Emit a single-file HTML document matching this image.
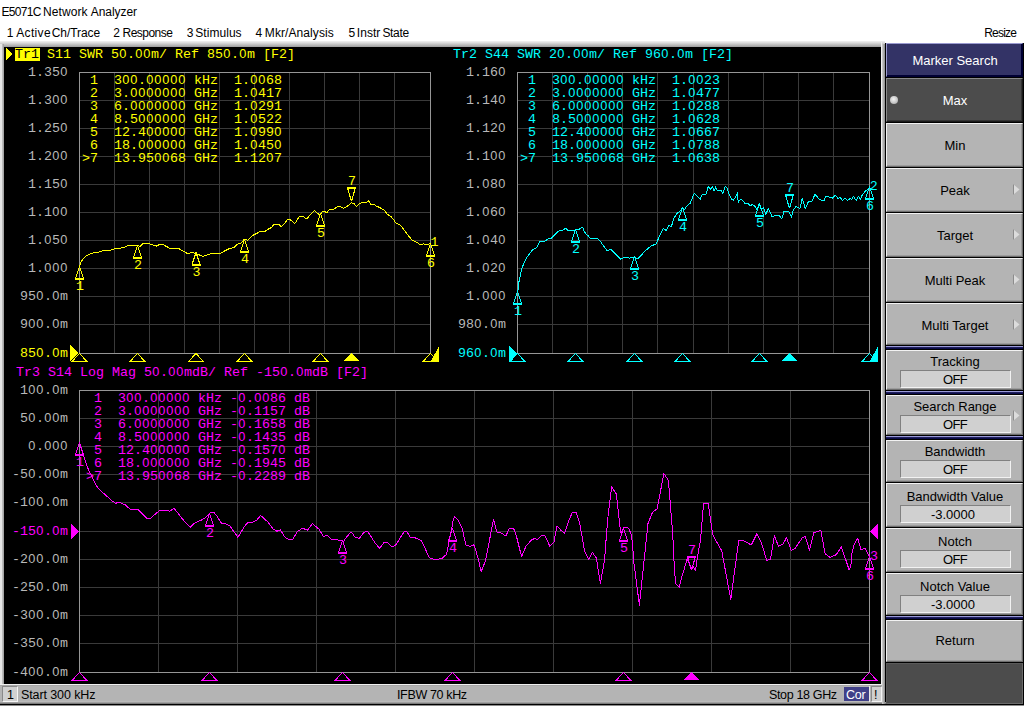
<!DOCTYPE html>
<html><head><meta charset="utf-8">
<style>
*{margin:0;padding:0}
html,body{width:1024px;height:706px;overflow:hidden;background:#ffffff;font-family:"Liberation Sans",sans-serif;color:#000;position:relative}
#svg{position:absolute;left:0;top:0}
#svg text{font-family:"Liberation Mono",monospace;font-size:13.333px}
#svg text.z{font-family:"Liberation Sans",sans-serif;font-size:12.78px}
</style></head><body>
<div style="position:absolute;left:1.5px;top:5px;white-space:nowrap;font-size:12px;letter-spacing:-0.7px">E5071C</div>
<div style="position:absolute;left:43px;top:5px;white-space:nowrap;font-size:12px;letter-spacing:0.1px">Network</div>
<div style="position:absolute;left:90.7px;top:5px;white-space:nowrap;font-size:12px;letter-spacing:-0.05px">Analyzer</div>
<div style="position:absolute;left:6.7px;top:26px;white-space:nowrap;font-size:12px;letter-spacing:0px">1</div>
<div style="position:absolute;left:16.3px;top:26px;white-space:nowrap;font-size:12px;letter-spacing:0.32px">Active</div>
<div style="position:absolute;left:51.8px;top:26px;white-space:nowrap;font-size:12px;letter-spacing:-0.09px">Ch/Trace</div>
<div style="position:absolute;left:113.3px;top:26px;white-space:nowrap;font-size:12px;letter-spacing:0px">2</div>
<div style="position:absolute;left:122.6px;top:26px;white-space:nowrap;font-size:12px;letter-spacing:-0.54px">Response</div>
<div style="position:absolute;left:186.7px;top:26px;white-space:nowrap;font-size:12px;letter-spacing:0px">3</div>
<div style="position:absolute;left:195.3px;top:26px;white-space:nowrap;font-size:12px;letter-spacing:0.04px">Stimulus</div>
<div style="position:absolute;left:255.4px;top:26px;white-space:nowrap;font-size:12px;letter-spacing:0px">4</div>
<div style="position:absolute;left:264.8px;top:26px;white-space:nowrap;font-size:12px;letter-spacing:0.09px">Mkr/Analysis</div>
<div style="position:absolute;left:348.4px;top:26px;white-space:nowrap;font-size:12px;letter-spacing:0px">5</div>
<div style="position:absolute;left:356.8px;top:26px;white-space:nowrap;font-size:12px;letter-spacing:0.05px">Instr</div>
<div style="position:absolute;left:382.4px;top:26px;white-space:nowrap;font-size:12px;letter-spacing:-0.33px">State</div>
<div style="position:absolute;left:984.2px;top:26px;white-space:nowrap;font-size:12px;letter-spacing:-0.79px">Resize</div>
<div style="position:absolute;left:0px;top:41px;width:885px;height:6px;background:linear-gradient(#f2f2f2,#dcdcdc 30%,#9c9c9c)"></div>
<div style="position:absolute;left:0px;top:44px;width:2px;height:641px;background:#e6e6e6"></div>
<div style="position:absolute;left:2px;top:44px;width:2px;height:641px;background:linear-gradient(90deg,#c8c8c8,#9a9a9a)"></div>
<div style="position:absolute;left:4px;top:47px;width:877px;height:637px;background:#000"></div>
<div style="position:absolute;left:881px;top:42px;width:1px;height:643px;background:#f0f0f0"></div>
<div style="position:absolute;left:882px;top:44px;width:3px;height:641px;background:linear-gradient(90deg,#d0d0d0,#8c8c8c)"></div>
<div style="position:absolute;left:885px;top:43px;width:139px;height:663px;background:#000"></div>
<div style="position:absolute;left:886px;top:43px;width:137px;height:34px;background:#333366;border-top:1px solid #9a9ad0;border-left:1px solid #9a9ad0;border-right:1px solid #000033;border-bottom:1px solid #000033;box-shadow:inset -1px -1px 0 #000033;box-sizing:border-box"></div>
<div style="position:absolute;left:855px;top:53px;width:200px;text-align:center;white-space:nowrap;font-size:13px;line-height:15px;color:#fff">Marker Search</div>
<div style="position:absolute;left:886px;top:78px;width:137px;height:44px;background:#4c4c4c;border-top:1px solid #8a8a8a;border-left:1px solid #8a8a8a;border-right:1px solid #1a1a1a;border-bottom:1px solid #1a1a1a;box-shadow:inset -1px -1px 0 #333333;box-sizing:border-box"></div>
<div style="position:absolute;left:855px;top:93px;width:200px;text-align:center;white-space:nowrap;font-size:13px;line-height:15px;color:#fff">Max</div>
<div style="position:absolute;left:890px;top:96px;width:8px;height:8px;border-radius:50%;background:radial-gradient(circle at 45% 40%,#f4f4f4,#c8c8c8 55%,#9a9a9a)"></div>
<div style="position:absolute;left:886px;top:123px;width:137px;height:44px;background:#b4b4b4;border-top:1px solid #f2f2f2;border-left:1px solid #f2f2f2;border-right:1px solid #6e6e6e;border-bottom:1px solid #6e6e6e;box-shadow:inset -1px -1px 0 #9c9c9c;box-sizing:border-box"></div>
<div style="position:absolute;left:855px;top:138px;width:200px;text-align:center;white-space:nowrap;font-size:13px;line-height:15px;color:#000">Min</div>
<div style="position:absolute;left:886px;top:168px;width:137px;height:44px;background:#b4b4b4;border-top:1px solid #f2f2f2;border-left:1px solid #f2f2f2;border-right:1px solid #6e6e6e;border-bottom:1px solid #6e6e6e;box-shadow:inset -1px -1px 0 #9c9c9c;box-sizing:border-box"></div>
<div style="position:absolute;left:855px;top:183px;width:200px;text-align:center;white-space:nowrap;font-size:13px;line-height:15px;color:#000">Peak</div>
<svg style="position:absolute;left:1012px;top:184px" width="9" height="12"><path d="M1.5 0.5 L7.5 5.5 L1.5 10.5 Z" fill="#dcdcdc"/><path d="M1.5 0.5 L1.5 10.5" stroke="#8c8c8c" stroke-width="1"/></svg>
<div style="position:absolute;left:886px;top:213px;width:137px;height:44px;background:#b4b4b4;border-top:1px solid #f2f2f2;border-left:1px solid #f2f2f2;border-right:1px solid #6e6e6e;border-bottom:1px solid #6e6e6e;box-shadow:inset -1px -1px 0 #9c9c9c;box-sizing:border-box"></div>
<div style="position:absolute;left:855px;top:228px;width:200px;text-align:center;white-space:nowrap;font-size:13px;line-height:15px;color:#000">Target</div>
<svg style="position:absolute;left:1012px;top:229px" width="9" height="12"><path d="M1.5 0.5 L7.5 5.5 L1.5 10.5 Z" fill="#dcdcdc"/><path d="M1.5 0.5 L1.5 10.5" stroke="#8c8c8c" stroke-width="1"/></svg>
<div style="position:absolute;left:886px;top:258px;width:137px;height:44px;background:#b4b4b4;border-top:1px solid #f2f2f2;border-left:1px solid #f2f2f2;border-right:1px solid #6e6e6e;border-bottom:1px solid #6e6e6e;box-shadow:inset -1px -1px 0 #9c9c9c;box-sizing:border-box"></div>
<div style="position:absolute;left:855px;top:273px;width:200px;text-align:center;white-space:nowrap;font-size:13px;line-height:15px;color:#000">Multi Peak</div>
<svg style="position:absolute;left:1012px;top:274px" width="9" height="12"><path d="M1.5 0.5 L7.5 5.5 L1.5 10.5 Z" fill="#dcdcdc"/><path d="M1.5 0.5 L1.5 10.5" stroke="#8c8c8c" stroke-width="1"/></svg>
<div style="position:absolute;left:886px;top:303px;width:137px;height:42px;background:#b4b4b4;border-top:1px solid #f2f2f2;border-left:1px solid #f2f2f2;border-right:1px solid #6e6e6e;border-bottom:1px solid #6e6e6e;box-shadow:inset -1px -1px 0 #9c9c9c;box-sizing:border-box"></div>
<div style="position:absolute;left:855px;top:318px;width:200px;text-align:center;white-space:nowrap;font-size:13px;line-height:15px;color:#000">Multi Target</div>
<svg style="position:absolute;left:1012px;top:319px" width="9" height="12"><path d="M1.5 0.5 L7.5 5.5 L1.5 10.5 Z" fill="#dcdcdc"/><path d="M1.5 0.5 L1.5 10.5" stroke="#8c8c8c" stroke-width="1"/></svg>
<div style="position:absolute;left:886px;top:346px;width:137px;height:1px;background:#9a9ad8"></div><div style="position:absolute;left:886px;top:347px;width:137px;height:2px;background:linear-gradient(#2a2a66,#000040)"></div>
<div style="position:absolute;left:886px;top:350px;width:137px;height:40px;background:#b4b4b4;border-top:1px solid #f2f2f2;border-left:1px solid #f2f2f2;border-right:1px solid #6e6e6e;border-bottom:1px solid #6e6e6e;box-shadow:inset -1px -1px 0 #9c9c9c;box-sizing:border-box"></div>
<div style="position:absolute;left:855px;top:354px;width:200px;text-align:center;white-space:nowrap;font-size:13px;line-height:15px;color:#000">Tracking</div>
<div style="position:absolute;left:900px;top:370px;width:111px;height:18px;background:#d0d0d0;border-top:1px solid #808080;border-left:1px solid #808080;border-bottom:1px solid #f2f2f2;border-right:1px solid #f2f2f2;box-sizing:border-box"></div><div style="position:absolute;left:855px;top:372px;width:200px;text-align:center;white-space:nowrap;font-size:13px;line-height:16px;color:#000;letter-spacing:-0.6px">OFF</div>
<div style="position:absolute;left:886px;top:395px;width:137px;height:40px;background:#b4b4b4;border-top:1px solid #f2f2f2;border-left:1px solid #f2f2f2;border-right:1px solid #6e6e6e;border-bottom:1px solid #6e6e6e;box-shadow:inset -1px -1px 0 #9c9c9c;box-sizing:border-box"></div>
<div style="position:absolute;left:855px;top:399px;width:200px;text-align:center;white-space:nowrap;font-size:13px;line-height:15px;color:#000">Search Range</div>
<div style="position:absolute;left:900px;top:415px;width:111px;height:18px;background:#d0d0d0;border-top:1px solid #808080;border-left:1px solid #808080;border-bottom:1px solid #f2f2f2;border-right:1px solid #f2f2f2;box-sizing:border-box"></div><div style="position:absolute;left:855px;top:417px;width:200px;text-align:center;white-space:nowrap;font-size:13px;line-height:16px;color:#000;letter-spacing:-0.6px">OFF</div>
<svg style="position:absolute;left:1012px;top:410px" width="9" height="12"><path d="M1.5 0.5 L7.5 5.5 L1.5 10.5 Z" fill="#dcdcdc"/><path d="M1.5 0.5 L1.5 10.5" stroke="#8c8c8c" stroke-width="1"/></svg>
<div style="position:absolute;left:886px;top:440px;width:137px;height:42px;background:#b4b4b4;border-top:1px solid #f2f2f2;border-left:1px solid #f2f2f2;border-right:1px solid #6e6e6e;border-bottom:1px solid #6e6e6e;box-shadow:inset -1px -1px 0 #9c9c9c;box-sizing:border-box"></div>
<div style="position:absolute;left:855px;top:444px;width:200px;text-align:center;white-space:nowrap;font-size:13px;line-height:15px;color:#000">Bandwidth</div>
<div style="position:absolute;left:900px;top:460px;width:111px;height:18px;background:#d0d0d0;border-top:1px solid #808080;border-left:1px solid #808080;border-bottom:1px solid #f2f2f2;border-right:1px solid #f2f2f2;box-sizing:border-box"></div><div style="position:absolute;left:855px;top:462px;width:200px;text-align:center;white-space:nowrap;font-size:13px;line-height:16px;color:#000;letter-spacing:-0.6px">OFF</div>
<div style="position:absolute;left:886px;top:483px;width:137px;height:44px;background:#b4b4b4;border-top:1px solid #f2f2f2;border-left:1px solid #f2f2f2;border-right:1px solid #6e6e6e;border-bottom:1px solid #6e6e6e;box-shadow:inset -1px -1px 0 #9c9c9c;box-sizing:border-box"></div>
<div style="position:absolute;left:855px;top:489px;width:200px;text-align:center;white-space:nowrap;font-size:13px;line-height:15px;color:#000">Bandwidth Value</div>
<div style="position:absolute;left:900px;top:505px;width:111px;height:18px;background:#d0d0d0;border-top:1px solid #808080;border-left:1px solid #808080;border-bottom:1px solid #f2f2f2;border-right:1px solid #f2f2f2;box-sizing:border-box"></div><div style="position:absolute;left:853px;top:507px;width:200px;text-align:center;white-space:nowrap;font-size:13px;line-height:16px;color:#000;letter-spacing:0">-3.0000</div>
<div style="position:absolute;left:886px;top:528px;width:137px;height:44px;background:#b4b4b4;border-top:1px solid #f2f2f2;border-left:1px solid #f2f2f2;border-right:1px solid #6e6e6e;border-bottom:1px solid #6e6e6e;box-shadow:inset -1px -1px 0 #9c9c9c;box-sizing:border-box"></div>
<div style="position:absolute;left:855px;top:534px;width:200px;text-align:center;white-space:nowrap;font-size:13px;line-height:15px;color:#000">Notch</div>
<div style="position:absolute;left:900px;top:550px;width:111px;height:18px;background:#d0d0d0;border-top:1px solid #808080;border-left:1px solid #808080;border-bottom:1px solid #f2f2f2;border-right:1px solid #f2f2f2;box-sizing:border-box"></div><div style="position:absolute;left:855px;top:552px;width:200px;text-align:center;white-space:nowrap;font-size:13px;line-height:16px;color:#000;letter-spacing:-0.6px">OFF</div>
<div style="position:absolute;left:886px;top:573px;width:137px;height:42px;background:#b4b4b4;border-top:1px solid #f2f2f2;border-left:1px solid #f2f2f2;border-right:1px solid #6e6e6e;border-bottom:1px solid #6e6e6e;box-shadow:inset -1px -1px 0 #9c9c9c;box-sizing:border-box"></div>
<div style="position:absolute;left:855px;top:579px;width:200px;text-align:center;white-space:nowrap;font-size:13px;line-height:15px;color:#000">Notch Value</div>
<div style="position:absolute;left:900px;top:595px;width:111px;height:18px;background:#d0d0d0;border-top:1px solid #808080;border-left:1px solid #808080;border-bottom:1px solid #f2f2f2;border-right:1px solid #f2f2f2;box-sizing:border-box"></div><div style="position:absolute;left:853px;top:597px;width:200px;text-align:center;white-space:nowrap;font-size:13px;line-height:16px;color:#000;letter-spacing:0">-3.0000</div>
<div style="position:absolute;left:886px;top:391px;width:137px;height:1px;background:#9a9ad8"></div><div style="position:absolute;left:886px;top:392px;width:137px;height:2px;background:linear-gradient(#2a2a66,#000040)"></div>
<div style="position:absolute;left:886px;top:436px;width:137px;height:1px;background:#9a9ad8"></div><div style="position:absolute;left:886px;top:437px;width:137px;height:2px;background:linear-gradient(#2a2a66,#000040)"></div>
<div style="position:absolute;left:886px;top:616px;width:137px;height:1px;background:#9a9ad8"></div><div style="position:absolute;left:886px;top:617px;width:137px;height:2px;background:linear-gradient(#2a2a66,#000040)"></div>
<div style="position:absolute;left:886px;top:620px;width:137px;height:42px;background:#b4b4b4;border-top:1px solid #f2f2f2;border-left:1px solid #f2f2f2;border-right:1px solid #6e6e6e;border-bottom:1px solid #6e6e6e;box-shadow:inset -1px -1px 0 #9c9c9c;box-sizing:border-box"></div>
<div style="position:absolute;left:855px;top:633px;width:200px;text-align:center;white-space:nowrap;font-size:13px;line-height:15px;color:#000">Return</div>
<div style="position:absolute;left:886px;top:663px;width:137px;height:41px;background:#4c4c4c;border-top:1px solid #5a5a5a;border-left:1px solid #5a5a5a;border-right:1px solid #6a6a6a;border-bottom:1px solid #6a6a6a;box-sizing:border-box"></div>
<div style="position:absolute;left:0px;top:684px;width:882px;height:1px;background:#f0f0f0"></div>
<div style="position:absolute;left:0px;top:685px;width:882px;height:18px;background:#b4b4b4"></div>
<div style="position:absolute;left:0px;top:685px;width:882px;height:1px;background:#a8a8a8"></div>
<div style="position:absolute;left:0px;top:701px;width:882px;height:1px;background:#bababa"></div>
<div style="position:absolute;left:0px;top:702px;width:886px;height:1px;background:#a0a0a0"></div>
<div style="position:absolute;left:0px;top:703px;width:886px;height:1px;background:#7a7a7a"></div>
<div style="position:absolute;left:0px;top:704px;width:1024px;height:1px;background:#000"></div>
<div style="position:absolute;left:0px;top:705px;width:1024px;height:1px;background:#8c8c8c"></div>
<div style="position:absolute;left:882px;top:685px;width:3px;height:19px;background:linear-gradient(90deg,#d0d0d0,#8c8c8c)"></div>
<div style="position:absolute;left:2px;top:686px;width:16px;height:16px;background:#d0d0d0;border-top:1px solid #8a8a8a;border-left:1px solid #8a8a8a;border-bottom:1px solid #f4f4f4;border-right:1px solid #f4f4f4;box-sizing:border-box"></div>
<div style="position:absolute;left:7px;top:688px;white-space:nowrap;font-size:12.5px;line-height:15px;color:#000;">1</div>
<div style="position:absolute;left:21px;top:688px;white-space:nowrap;font-size:12.5px;line-height:15px;color:#000;letter-spacing:-0.1px">Start 300 kHz</div>
<div style="position:absolute;left:397px;top:688px;white-space:nowrap;font-size:12.5px;line-height:15px;color:#000;letter-spacing:-0.35px">IFBW 70 kHz</div>
<div style="position:absolute;left:769px;top:688px;white-space:nowrap;font-size:12.5px;line-height:15px;color:#000;letter-spacing:-0.35px">Stop 18 GHz</div>
<div style="position:absolute;left:844px;top:687px;width:25px;height:14px;background:#404088"></div>
<div style="position:absolute;left:869px;top:686px;width:1px;height:16px;background:#e8e8e8"></div>
<div style="position:absolute;left:871px;top:686px;width:11px;height:16px;background:#d0d0d0;border-top:1px solid #8a8a8a;border-left:1px solid #8a8a8a;border-bottom:1px solid #f4f4f4;border-right:1px solid #f4f4f4;box-sizing:border-box"></div>
<div style="position:absolute;left:846px;top:688px;white-space:nowrap;font-size:12.5px;line-height:15px;color:#000;color:#fff;letter-spacing:-0.2px">Cor</div>
<div style="position:absolute;left:874px;top:688px;white-space:nowrap;font-size:12.5px;line-height:15px;color:#000;">!</div>
<svg id="svg" width="881" height="684" shape-rendering="crispEdges">
<g stroke="#3a3a3a" stroke-width="1"><line x1="114.5" y1="72" x2="114.5" y2="353"/><line x1="149.5" y1="72" x2="149.5" y2="353"/><line x1="184.5" y1="72" x2="184.5" y2="353"/><line x1="219.5" y1="72" x2="219.5" y2="353"/><line x1="254.5" y1="72" x2="254.5" y2="353"/><line x1="289.5" y1="72" x2="289.5" y2="353"/><line x1="324.5" y1="72" x2="324.5" y2="353"/><line x1="359.5" y1="72" x2="359.5" y2="353"/><line x1="394.5" y1="72" x2="394.5" y2="353"/><line x1="79" y1="100.5" x2="430" y2="100.5"/><line x1="79" y1="128.5" x2="430" y2="128.5"/><line x1="79" y1="156.5" x2="430" y2="156.5"/><line x1="79" y1="184.5" x2="430" y2="184.5"/><line x1="79" y1="212.5" x2="430" y2="212.5"/><line x1="79" y1="240.5" x2="430" y2="240.5"/><line x1="79" y1="268.5" x2="430" y2="268.5"/><line x1="79" y1="296.5" x2="430" y2="296.5"/><line x1="79" y1="324.5" x2="430" y2="324.5"/></g><rect x="79.5" y="72.5" width="351" height="281" fill="none" stroke="#969696" stroke-width="1"/>
<text x="28.00" y="75.5" fill="#b8b8b8" xml:space="preserve">1.35 </text><text class="z" x="60.30" y="75.5" fill="#b8b8b8">0</text>
<text x="28.00" y="103.6" fill="#b8b8b8" xml:space="preserve">1.3  </text><text class="z" x="52.30 60.30" y="103.6" fill="#b8b8b8">00</text>
<text x="28.00" y="131.7" fill="#b8b8b8" xml:space="preserve">1.25 </text><text class="z" x="60.30" y="131.7" fill="#b8b8b8">0</text>
<text x="28.00" y="159.8" fill="#b8b8b8" xml:space="preserve">1.2  </text><text class="z" x="52.30 60.30" y="159.8" fill="#b8b8b8">00</text>
<text x="28.00" y="187.9" fill="#b8b8b8" xml:space="preserve">1.15 </text><text class="z" x="60.30" y="187.9" fill="#b8b8b8">0</text>
<text x="28.00" y="216.0" fill="#b8b8b8" xml:space="preserve">1.1  </text><text class="z" x="52.30 60.30" y="216.0" fill="#b8b8b8">00</text>
<text x="28.00" y="244.1" fill="#b8b8b8" xml:space="preserve">1. 5 </text><text class="z" x="44.30 60.30" y="244.1" fill="#b8b8b8">00</text>
<text x="28.00" y="272.2" fill="#b8b8b8" xml:space="preserve">1.   </text><text class="z" x="44.30 52.30 60.30" y="272.2" fill="#b8b8b8">000</text>
<text x="20.00" y="300.3" fill="#b8b8b8" xml:space="preserve">95 . m</text><text class="z" x="36.30 52.30" y="300.3" fill="#b8b8b8">00</text>
<text x="20.00" y="328.4" fill="#b8b8b8" xml:space="preserve">9  . m</text><text class="z" x="28.30 36.30 52.30" y="328.4" fill="#b8b8b8">000</text>
<text x="20.00" y="356.5" fill="#ffff00" xml:space="preserve">85 . m</text><text class="z" x="36.30 52.30" y="356.5" fill="#ffff00">00</text>
<rect x="15" y="48" width="25" height="13" fill="#ffff00"/>
<path d="M6 48 L12.5 54 L6 60.5 Z" fill="#ffff00"/>
<text x="15.00" y="58" fill="#000000" xml:space="preserve">Tr1</text>
<text x="15.00" y="58" fill="#ffff00" xml:space="preserve">    S11 SWR 5 .  m/ Ref 85 . m [F2]</text><text class="z" x="119.30 135.30 143.30 223.29 239.29" y="58" fill="#ffff00">00000</text>
<text x="82.00" y="84" fill="#ffff00" xml:space="preserve"> 1  3  .      kHz  1.  68</text><text class="z" x="122.30 130.30 146.30 154.30 162.30 170.30 178.30 250.30 258.30" y="84" fill="#ffff00">000000000</text>
<text x="82.00" y="97" fill="#ffff00" xml:space="preserve"> 2  3.        GHz  1. 417</text><text class="z" x="130.30 138.30 146.30 154.30 162.30 170.30 178.30 250.30" y="97" fill="#ffff00">00000000</text>
<text x="82.00" y="110" fill="#ffff00" xml:space="preserve"> 3  6.        GHz  1. 291</text><text class="z" x="130.30 138.30 146.30 154.30 162.30 170.30 178.30 250.30" y="110" fill="#ffff00">00000000</text>
<text x="82.00" y="123" fill="#ffff00" xml:space="preserve"> 4  8.5       GHz  1. 522</text><text class="z" x="138.30 146.30 154.30 162.30 170.30 178.30 250.30" y="123" fill="#ffff00">0000000</text>
<text x="82.00" y="136" fill="#ffff00" xml:space="preserve"> 5  12.4      GHz  1. 99 </text><text class="z" x="146.30 154.30 162.30 170.30 178.30 250.30 274.30" y="136" fill="#ffff00">0000000</text>
<text x="82.00" y="149" fill="#ffff00" xml:space="preserve"> 6  18.       GHz  1. 45 </text><text class="z" x="138.30 146.30 154.30 162.30 170.30 178.30 250.30 274.30" y="149" fill="#ffff00">00000000</text>
<text x="82.00" y="162" fill="#ffff00" xml:space="preserve">&gt;7  13.95  68 GHz  1.12 7</text><text class="z" x="154.30 162.30 266.30" y="162" fill="#ffff00">000</text>
<polyline points="79.5,265.9 81.0,262.2 83.2,258.6 86.1,256.0 89.0,254.6 93.4,252.7 96.4,252.3 98.6,252.0 100.7,251.2 106.6,250.5 112.5,249.8 115.4,248.3 122.7,247.9 128.6,245.4 135.9,245.4 140.3,246.4 143.2,243.5 147.6,243.5 152.0,244.6 156.4,246.1 159.3,244.6 163.0,244.6 171.0,249.0 178.3,248.3 187.1,253.4 193.0,252.7 195.9,253.4 202.5,256.4 210.6,253.7 216.4,253.1 220.0,253.4 230.0,248.2 233.5,247.9 238.5,243.4 241.3,243.0 244.2,239.4 247.7,240.1 252.7,235.4 256.2,233.7 260.5,231.3 265.4,231.2 267.5,229.5 271.8,227.4 273.9,224.2 278.9,224.2 281.0,226.4 283.1,225.2 287.8,219.3 290.2,219.6 294.9,223.5 299.4,216.5 302.9,216.5 306.5,218.9 314.7,210.4 317.1,213.2 320.2,215.0 322.8,211.1 327.0,212.5 329.2,209.7 333.4,209.4 336.9,207.1 338.5,206.5 341.4,207.1 343.5,208.5 347.0,206.5 351.3,202.9 354.1,203.7 356.5,206.5 359.8,203.3 363.3,202.3 366.2,202.9 368.3,200.5 371.1,204.7 374.0,204.3 376.8,206.5 378.9,207.1 383.9,209.9 387.4,214.2 391.0,216.7 393.1,218.9 395.9,223.1 400.2,225.0 404.4,230.2 407.9,235.2 412.2,240.1 416.4,242.2 420.0,244.4 423.5,243.9 427.8,244.4 430.6,243.7" fill="none" stroke="#ffff00" stroke-width="1" stroke-linejoin="round"/>
<g stroke="#3a3a3a" stroke-width="1"><line x1="552.5" y1="72" x2="552.5" y2="353"/><line x1="587.5" y1="72" x2="587.5" y2="353"/><line x1="622.5" y1="72" x2="622.5" y2="353"/><line x1="657.5" y1="72" x2="657.5" y2="353"/><line x1="693.5" y1="72" x2="693.5" y2="353"/><line x1="728.5" y1="72" x2="728.5" y2="353"/><line x1="763.5" y1="72" x2="763.5" y2="353"/><line x1="798.5" y1="72" x2="798.5" y2="353"/><line x1="833.5" y1="72" x2="833.5" y2="353"/><line x1="517" y1="100.5" x2="869" y2="100.5"/><line x1="517" y1="128.5" x2="869" y2="128.5"/><line x1="517" y1="156.5" x2="869" y2="156.5"/><line x1="517" y1="184.5" x2="869" y2="184.5"/><line x1="517" y1="212.5" x2="869" y2="212.5"/><line x1="517" y1="240.5" x2="869" y2="240.5"/><line x1="517" y1="268.5" x2="869" y2="268.5"/><line x1="517" y1="296.5" x2="869" y2="296.5"/><line x1="517" y1="324.5" x2="869" y2="324.5"/></g><rect x="517.5" y="72.5" width="352" height="281" fill="none" stroke="#969696" stroke-width="1"/>
<text x="466.00" y="75.5" fill="#b8b8b8" xml:space="preserve">1.16 </text><text class="z" x="498.30" y="75.5" fill="#b8b8b8">0</text>
<text x="466.00" y="103.6" fill="#b8b8b8" xml:space="preserve">1.14 </text><text class="z" x="498.30" y="103.6" fill="#b8b8b8">0</text>
<text x="466.00" y="131.7" fill="#b8b8b8" xml:space="preserve">1.12 </text><text class="z" x="498.30" y="131.7" fill="#b8b8b8">0</text>
<text x="466.00" y="159.8" fill="#b8b8b8" xml:space="preserve">1.1  </text><text class="z" x="490.30 498.30" y="159.8" fill="#b8b8b8">00</text>
<text x="466.00" y="187.9" fill="#b8b8b8" xml:space="preserve">1. 8 </text><text class="z" x="482.30 498.30" y="187.9" fill="#b8b8b8">00</text>
<text x="466.00" y="216.0" fill="#b8b8b8" xml:space="preserve">1. 6 </text><text class="z" x="482.30 498.30" y="216.0" fill="#b8b8b8">00</text>
<text x="466.00" y="244.1" fill="#b8b8b8" xml:space="preserve">1. 4 </text><text class="z" x="482.30 498.30" y="244.1" fill="#b8b8b8">00</text>
<text x="466.00" y="272.2" fill="#b8b8b8" xml:space="preserve">1. 2 </text><text class="z" x="482.30 498.30" y="272.2" fill="#b8b8b8">00</text>
<text x="466.00" y="300.3" fill="#b8b8b8" xml:space="preserve">1.   </text><text class="z" x="482.30 490.30 498.30" y="300.3" fill="#b8b8b8">000</text>
<text x="458.00" y="328.4" fill="#b8b8b8" xml:space="preserve">98 . m</text><text class="z" x="474.30 490.30" y="328.4" fill="#b8b8b8">00</text>
<text x="458.00" y="356.5" fill="#00ffff" xml:space="preserve">96 . m</text><text class="z" x="474.30 490.30" y="356.5" fill="#00ffff">00</text>
<text x="453.00" y="58" fill="#00ffff" xml:space="preserve">Tr2 S44 SWR 2 .  m/ Ref 96 . m [F2]</text><text class="z" x="557.30 573.30 581.30 661.29 677.29" y="58" fill="#00ffff">00000</text>
<text x="520.00" y="84" fill="#00ffff" xml:space="preserve"> 1  3  .      kHz  1.  23</text><text class="z" x="560.30 568.30 584.30 592.30 600.30 608.30 616.30 688.30 696.30" y="84" fill="#00ffff">000000000</text>
<text x="520.00" y="97" fill="#00ffff" xml:space="preserve"> 2  3.        GHz  1. 477</text><text class="z" x="568.30 576.30 584.30 592.30 600.30 608.30 616.30 688.30" y="97" fill="#00ffff">00000000</text>
<text x="520.00" y="110" fill="#00ffff" xml:space="preserve"> 3  6.        GHz  1. 288</text><text class="z" x="568.30 576.30 584.30 592.30 600.30 608.30 616.30 688.30" y="110" fill="#00ffff">00000000</text>
<text x="520.00" y="123" fill="#00ffff" xml:space="preserve"> 4  8.5       GHz  1. 628</text><text class="z" x="576.30 584.30 592.30 600.30 608.30 616.30 688.30" y="123" fill="#00ffff">0000000</text>
<text x="520.00" y="136" fill="#00ffff" xml:space="preserve"> 5  12.4      GHz  1. 667</text><text class="z" x="584.30 592.30 600.30 608.30 616.30 688.30" y="136" fill="#00ffff">000000</text>
<text x="520.00" y="149" fill="#00ffff" xml:space="preserve"> 6  18.       GHz  1. 788</text><text class="z" x="576.30 584.30 592.30 600.30 608.30 616.30 688.30" y="149" fill="#00ffff">0000000</text>
<text x="520.00" y="162" fill="#00ffff" xml:space="preserve">&gt;7  13.95  68 GHz  1. 638</text><text class="z" x="592.30 600.30 688.30" y="162" fill="#00ffff">000</text>
<polyline points="517.8,292.0 518.8,282.6 522.0,267.8 526.3,258.2 532.6,249.7 536.9,247.6 540.1,241.2 544.3,241.8 547.5,239.1 550.7,238.7 555.0,234.4 558.2,231.2 560.3,230.4 562.4,230.2 565.6,228.3 568.1,230.5 574.1,230.5 575.5,229.8 579.1,229.3 582.6,227.1 584.0,231.2 586.2,234.4 588.3,235.6 590.1,238.3 595.4,238.3 598.2,239.2 600.3,241.2 604.6,247.5 607.0,250.3 611.3,249.7 615.5,254.0 620.8,259.3 625.1,257.1 629.3,258.2 634.7,257.1 637.8,258.8 645.3,250.8 651.6,245.5 655.9,244.4 659.1,237.0 660.0,235.3 663.4,228.6 666.4,230.6 668.5,225.5 671.5,226.3 673.6,218.7 677.0,213.6 680.4,210.6 682.5,207.6 684.7,209.3 687.2,205.5 690.0,203.5 694.3,193.3 700.2,199.2 702.4,194.3 706.1,194.1 708.3,186.3 710.4,189.5 712.3,186.3 714.2,191.1 715.6,186.8 717.4,190.6 721.1,190.6 722.8,193.3 725.2,186.3 727.1,187.9 729.2,194.3 731.9,199.7 733.5,200.2 736.7,194.9 737.3,192.7 738.3,202.4 740.5,199.2 742.6,200.2 744.8,203.5 748.5,204.0 750.2,206.1 752.3,204.5 754.4,205.6 757.1,209.9 759.3,203.5 761.4,209.9 763.6,207.2 765.7,214.7 768.4,208.3 772.2,216.9 774.9,215.3 779.2,215.3 781.8,219.0 784.0,211.0 787.2,211.5 789.4,212.1 791.5,217.4 793.1,210.4 795.8,206.7 800.0,208.3 802.3,198.0 805.2,208.8 808.2,202.0 812.1,201.0 815.0,194.2 818.9,199.0 823.8,201.0 825.7,196.1 832.6,198.1 835.5,195.2 838.4,199.0 840.0,196.9 842.5,200.5 845.0,198.3 847.4,200.5 849.9,198.7 851.7,199.4 853.5,196.6 856.3,200.5 858.4,196.6 860.5,199.0 862.3,194.8 865.5,190.9 869.4,188.3" fill="none" stroke="#00ffff" stroke-width="1" stroke-linejoin="round"/>
<g stroke="#3a3a3a" stroke-width="1"><line x1="158.5" y1="390" x2="158.5" y2="672"/><line x1="237.5" y1="390" x2="237.5" y2="672"/><line x1="316.5" y1="390" x2="316.5" y2="672"/><line x1="395.5" y1="390" x2="395.5" y2="672"/><line x1="474.5" y1="390" x2="474.5" y2="672"/><line x1="553.5" y1="390" x2="553.5" y2="672"/><line x1="632.5" y1="390" x2="632.5" y2="672"/><line x1="711.5" y1="390" x2="711.5" y2="672"/><line x1="790.5" y1="390" x2="790.5" y2="672"/><line x1="79" y1="418.5" x2="869" y2="418.5"/><line x1="79" y1="446.5" x2="869" y2="446.5"/><line x1="79" y1="474.5" x2="869" y2="474.5"/><line x1="79" y1="502.5" x2="869" y2="502.5"/><line x1="79" y1="531.5" x2="869" y2="531.5"/><line x1="79" y1="559.5" x2="869" y2="559.5"/><line x1="79" y1="587.5" x2="869" y2="587.5"/><line x1="79" y1="615.5" x2="869" y2="615.5"/><line x1="79" y1="643.5" x2="869" y2="643.5"/></g><rect x="79.5" y="390.5" width="790" height="282" fill="none" stroke="#969696" stroke-width="1"/>
<text x="20.00" y="393.5" fill="#b8b8b8" xml:space="preserve">1  . m</text><text class="z" x="28.30 36.30 52.30" y="393.5" fill="#b8b8b8">000</text>
<text x="20.00" y="421.7" fill="#b8b8b8" xml:space="preserve">5 .  m</text><text class="z" x="28.30 44.30 52.30" y="421.7" fill="#b8b8b8">000</text>
<text x="28.00" y="449.9" fill="#b8b8b8" xml:space="preserve"> .   </text><text class="z" x="28.30 44.30 52.30 60.30" y="449.9" fill="#b8b8b8">0000</text>
<text x="12.00" y="478.1" fill="#b8b8b8" xml:space="preserve">-5 .  m</text><text class="z" x="28.30 44.30 52.30" y="478.1" fill="#b8b8b8">000</text>
<text x="12.00" y="506.3" fill="#b8b8b8" xml:space="preserve">-1  . m</text><text class="z" x="28.30 36.30 52.30" y="506.3" fill="#b8b8b8">000</text>
<text x="12.00" y="534.5" fill="#ff00ff" xml:space="preserve">-15 . m</text><text class="z" x="36.30 52.30" y="534.5" fill="#ff00ff">00</text>
<text x="12.00" y="562.7" fill="#b8b8b8" xml:space="preserve">-2  . m</text><text class="z" x="28.30 36.30 52.30" y="562.7" fill="#b8b8b8">000</text>
<text x="12.00" y="590.9" fill="#b8b8b8" xml:space="preserve">-25 . m</text><text class="z" x="36.30 52.30" y="590.9" fill="#b8b8b8">00</text>
<text x="12.00" y="619.1" fill="#b8b8b8" xml:space="preserve">-3  . m</text><text class="z" x="28.30 36.30 52.30" y="619.1" fill="#b8b8b8">000</text>
<text x="12.00" y="647.3" fill="#b8b8b8" xml:space="preserve">-35 . m</text><text class="z" x="36.30 52.30" y="647.3" fill="#b8b8b8">00</text>
<text x="12.00" y="675.5" fill="#b8b8b8" xml:space="preserve">-4  . m</text><text class="z" x="28.30 36.30 52.30" y="675.5" fill="#b8b8b8">000</text>
<text x="16.00" y="376" fill="#ff00ff" xml:space="preserve">Tr3 S14 Log Mag 5 .  mdB/ Ref -15 . mdB [F2]</text><text class="z" x="152.30 168.30 176.30 280.29 296.29" y="376" fill="#ff00ff">00000</text>
<text x="86.00" y="402" fill="#ff00ff" xml:space="preserve"> 1  3  .      kHz - .  86 dB</text><text class="z" x="126.30 134.30 150.30 158.30 166.30 174.30 182.30 238.30 254.30 262.30" y="402" fill="#ff00ff">0000000000</text>
<text x="86.00" y="415" fill="#ff00ff" xml:space="preserve"> 2  3.        GHz - .1157 dB</text><text class="z" x="134.30 142.30 150.30 158.30 166.30 174.30 182.30 238.30" y="415" fill="#ff00ff">00000000</text>
<text x="86.00" y="428" fill="#ff00ff" xml:space="preserve"> 3  6.        GHz - .1658 dB</text><text class="z" x="134.30 142.30 150.30 158.30 166.30 174.30 182.30 238.30" y="428" fill="#ff00ff">00000000</text>
<text x="86.00" y="441" fill="#ff00ff" xml:space="preserve"> 4  8.5       GHz - .1435 dB</text><text class="z" x="142.30 150.30 158.30 166.30 174.30 182.30 238.30" y="441" fill="#ff00ff">0000000</text>
<text x="86.00" y="454" fill="#ff00ff" xml:space="preserve"> 5  12.4      GHz - .157  dB</text><text class="z" x="150.30 158.30 166.30 174.30 182.30 238.30 278.30" y="454" fill="#ff00ff">0000000</text>
<text x="86.00" y="467" fill="#ff00ff" xml:space="preserve"> 6  18.       GHz - .1945 dB</text><text class="z" x="142.30 150.30 158.30 166.30 174.30 182.30 238.30" y="467" fill="#ff00ff">0000000</text>
<text x="86.00" y="480" fill="#ff00ff" xml:space="preserve">&gt;7  13.95  68 GHz - .2289 dB</text><text class="z" x="158.30 166.30 238.30" y="480" fill="#ff00ff">000</text>
<polyline points="79.6,443.0 82.7,453.4 87.0,466.1 91.2,475.7 96.6,486.3 104.0,493.7 112.5,501.2 115.7,503.3 118.9,502.2 125.2,504.8 130.6,509.7 138.0,509.7 146.5,518.2 150.7,518.2 159.2,510.7 163.5,510.3 169.9,511.2 174.1,508.2 182.6,519.2 190.1,527.3 193.8,523.6 196.4,522.3 200.8,520.4 204.6,518.2 209.7,513.4 211.7,512.1 213.6,512.1 216.8,515.9 220.6,522.3 221.8,523.4 226.9,524.2 230.0,526.1 237.9,537.3 244.2,526.7 247.9,522.5 252.3,522.2 256.7,520.1 260.7,515.5 268.1,522.2 273.4,529.2 276.9,531.3 280.4,529.7 284.8,537.1 289.2,539.8 292.7,539.4 297.1,531.8 302.4,528.3 307.7,530.1 312.4,523.6 319.1,529.2 323.5,536.6 326.9,535.2 331.4,539.5 337.7,539.5 338.4,540.3 342.2,540.3 343.5,541.6 344.1,540.6 346.7,536.8 349.8,533.3 351.1,532.1 353.0,534.2 354.9,537.1 357.2,537.4 359.1,538.5 361.3,535.8 363.2,533.3 365.0,532.1 367.4,531.0 375.3,543.3 379.7,548.2 384.1,542.4 387.6,542.4 392.0,546.8 395.5,545.4 404.3,531.3 407.0,531.8 410.8,538.0 414.4,537.5 421.4,540.6 424.9,548.0 429.3,557.7 435.0,559.6 442.0,558.6 446.7,554.1 448.6,544.0 450.6,534.6 453.3,519.8 454.5,516.5 458.4,520.6 462.3,528.4 464.2,537.7 466.2,545.5 470.1,546.3 474.0,544.8 477.7,556.8 481.2,571.7 485.6,560.3 493.5,519.5 497.0,532.2 501.4,533.1 505.8,536.0 509.3,528.7 513.7,528.7 516.3,535.7 521.6,556.8 526.0,546.2 531.3,540.1 534.8,538.3 537.4,539.6 541.8,535.3 545.3,536.0 549.7,546.2 554.1,541.8 556.8,526.0 561.1,530.4 564.7,533.1 569.1,519.9 572.6,512.0 576.1,512.0 579.6,522.5 584.5,550.7 588.6,559.3 592.5,552.5 596.3,558.0 600.4,583.6 604.7,558.8 605.8,543.2 607.8,518.3 611.7,486.8 616.3,494.0 619.1,519.0 620.3,529.2 621.0,533.1 623.4,528.0 625.7,527.2 628.8,528.4 631.2,534.6 632.7,545.5 633.5,559.6 639.4,605.1 648.0,523.5 652.6,512.2 657.1,508.8 663.9,473.6 668.4,480.4 672.8,535.0 673.2,544.4 674.0,560.7 675.5,583.3 679.4,587.2 680.6,581.0 683.7,570.9 687.2,558.4 691.1,568.5 692.7,565.4 695.4,570.9 696.9,560.7 698.9,549.0 700.4,541.2 703.6,503.1 708.1,503.1 712.7,534.8 721.7,550.7 730.8,599.5 738.7,540.5 743.3,540.5 751.2,545.0 756.9,533.7 761.3,542.5 766.7,560.2 770.5,559.5 774.4,535.4 778.3,546.1 782.6,544.6 786.6,537.6 791.1,550.3 795.3,548.2 802.4,537.6 805.3,536.6 809.5,550.3 813.8,532.6 820.9,530.5 825.1,553.8 830.0,557.4 836.4,554.6 841.4,546.8 849.2,570.1 850.8,566.5 851.7,554.6 853.8,545.3 857.6,538.1 861.0,549.5 864.9,548.3 869.5,556.3" fill="none" stroke="#ff00ff" stroke-width="1" stroke-linejoin="round"/>
<path d="M79.5 266.5 L75.5 278.5 M79.5 266.5 L83.5 278.5" fill="none" stroke="#ffff00" stroke-width="1.1"/><rect x="75.0" y="278" width="9" height="2" fill="#ffff00"/><text x="76.00" y="290" fill="#ffff00" xml:space="preserve">1</text>
<path d="M137.5 245.5 L133.5 257.5 M137.5 245.5 L141.5 257.5" fill="none" stroke="#ffff00" stroke-width="1.1"/><rect x="133.0" y="257" width="9" height="2" fill="#ffff00"/><text x="134.00" y="269" fill="#ffff00" xml:space="preserve">2</text>
<path d="M196 252.5 L192 264.5 M196 252.5 L200 264.5" fill="none" stroke="#ffff00" stroke-width="1.1"/><rect x="191.5" y="264" width="9" height="2" fill="#ffff00"/><text x="192.50" y="276" fill="#ffff00" xml:space="preserve">3</text>
<path d="M244.5 239.5 L240.5 251.5 M244.5 239.5 L248.5 251.5" fill="none" stroke="#ffff00" stroke-width="1.1"/><rect x="240.0" y="251" width="9" height="2" fill="#ffff00"/><text x="241.00" y="263" fill="#ffff00" xml:space="preserve">4</text>
<path d="M320.5 213.5 L316.5 225.5 M320.5 213.5 L324.5 225.5" fill="none" stroke="#ffff00" stroke-width="1.1"/><rect x="316.0" y="225" width="9" height="2" fill="#ffff00"/><text x="317.00" y="237" fill="#ffff00" xml:space="preserve">5</text>
<path d="M430.5 243.5 L426.5 255.5 M430.5 243.5 L434.5 255.5" fill="none" stroke="#ffff00" stroke-width="1.1"/><rect x="426.0" y="255" width="9" height="2" fill="#ffff00"/><text x="427.00" y="267" fill="#ffff00" xml:space="preserve">6</text>
<path d="M351.5 201.5 L347.5 187.5 M351.5 201.5 L355.5 187.5" fill="none" stroke="#ffff00" stroke-width="1.1"/><rect x="347.0" y="187" width="9" height="2" fill="#ffff00"/><text x="348.00" y="185" fill="#ffff00" xml:space="preserve">7</text>
<text x="430.50" y="246" fill="#ffff00" xml:space="preserve">1</text>
<path d="M79.5 353.5 L72.5 361 L86.5 361 Z" fill="none" stroke="#ffff00" stroke-width="1"/>
<path d="M137.5 353.5 L130.5 361 L144.5 361 Z" fill="none" stroke="#ffff00" stroke-width="1"/>
<path d="M196 353.5 L189 361 L203 361 Z" fill="none" stroke="#ffff00" stroke-width="1"/>
<path d="M244.5 353.5 L237.5 361 L251.5 361 Z" fill="none" stroke="#ffff00" stroke-width="1"/>
<path d="M320.5 353.5 L313.5 361 L327.5 361 Z" fill="none" stroke="#ffff00" stroke-width="1"/>
<path d="M430.5 353.5 L423.5 361 L437.5 361 Z" fill="none" stroke="#ffff00" stroke-width="1"/>
<path d="M351.5 353 L344.0 361 L359.0 361 Z" fill="#ffff00"/>
<path d="M70 345 L79 353 L70 361 Z" fill="#ffff00"/>
<path d="M431 361 L439 346 L439 361 Z" fill="#ffff00"/>
<path d="M517.5 291.5 L513.5 303.5 M517.5 291.5 L521.5 303.5" fill="none" stroke="#00ffff" stroke-width="1.1"/><rect x="513.0" y="303" width="9" height="2" fill="#00ffff"/><text x="514.00" y="315" fill="#00ffff" xml:space="preserve">1</text>
<path d="M575.5 229.5 L571.5 241.5 M575.5 229.5 L579.5 241.5" fill="none" stroke="#00ffff" stroke-width="1.1"/><rect x="571.0" y="241" width="9" height="2" fill="#00ffff"/><text x="572.00" y="253" fill="#00ffff" xml:space="preserve">2</text>
<path d="M634.5 256.5 L630.5 268.5 M634.5 256.5 L638.5 268.5" fill="none" stroke="#00ffff" stroke-width="1.1"/><rect x="630.0" y="268" width="9" height="2" fill="#00ffff"/><text x="631.00" y="280" fill="#00ffff" xml:space="preserve">3</text>
<path d="M682.5 207.5 L678.5 219.5 M682.5 207.5 L686.5 219.5" fill="none" stroke="#00ffff" stroke-width="1.1"/><rect x="678.0" y="219" width="9" height="2" fill="#00ffff"/><text x="679.00" y="231" fill="#00ffff" xml:space="preserve">4</text>
<path d="M759.5 203.5 L755.5 215.5 M759.5 203.5 L763.5 215.5" fill="none" stroke="#00ffff" stroke-width="1.1"/><rect x="755.0" y="215" width="9" height="2" fill="#00ffff"/><text x="756.00" y="227" fill="#00ffff" xml:space="preserve">5</text>
<path d="M869.5 186.5 L865.5 198.5 M869.5 186.5 L873.5 198.5" fill="none" stroke="#00ffff" stroke-width="1.1"/><rect x="865.0" y="198" width="9" height="2" fill="#00ffff"/><text x="866.00" y="210" fill="#00ffff" xml:space="preserve">6</text>
<path d="M789.5 208.5 L785.5 194.5 M789.5 208.5 L793.5 194.5" fill="none" stroke="#00ffff" stroke-width="1.1"/><rect x="785.0" y="194" width="9" height="2" fill="#00ffff"/><text x="786.00" y="192" fill="#00ffff" xml:space="preserve">7</text>
<text x="869.80" y="190" fill="#00ffff" xml:space="preserve">2</text>
<path d="M517.5 353.5 L510.5 361 L524.5 361 Z" fill="none" stroke="#00ffff" stroke-width="1"/>
<path d="M575.5 353.5 L568.5 361 L582.5 361 Z" fill="none" stroke="#00ffff" stroke-width="1"/>
<path d="M634.5 353.5 L627.5 361 L641.5 361 Z" fill="none" stroke="#00ffff" stroke-width="1"/>
<path d="M682.5 353.5 L675.5 361 L689.5 361 Z" fill="none" stroke="#00ffff" stroke-width="1"/>
<path d="M759.5 353.5 L752.5 361 L766.5 361 Z" fill="none" stroke="#00ffff" stroke-width="1"/>
<path d="M869.5 353.5 L862.5 361 L876.5 361 Z" fill="none" stroke="#00ffff" stroke-width="1"/>
<path d="M789.5 353 L782.0 361 L797.0 361 Z" fill="#00ffff"/>
<path d="M509 346 L517.5 353.5 L509 361 Z" fill="#00ffff"/>
<path d="M870 361 L878 346 L878 361 Z" fill="#00ffff"/>
<path d="M79.5 442.5 L75.5 454.5 M79.5 442.5 L83.5 454.5" fill="none" stroke="#ff00ff" stroke-width="1.1"/><rect x="75.0" y="454" width="9" height="2" fill="#ff00ff"/><text x="76.00" y="466" fill="#ff00ff" xml:space="preserve">1</text>
<path d="M209.5 513.5 L205.5 525.5 M209.5 513.5 L213.5 525.5" fill="none" stroke="#ff00ff" stroke-width="1.1"/><rect x="205.0" y="525" width="9" height="2" fill="#ff00ff"/><text x="206.00" y="537" fill="#ff00ff" xml:space="preserve">2</text>
<path d="M342.5 540.5 L338.5 552.5 M342.5 540.5 L346.5 552.5" fill="none" stroke="#ff00ff" stroke-width="1.1"/><rect x="338.0" y="552" width="9" height="2" fill="#ff00ff"/><text x="339.00" y="564" fill="#ff00ff" xml:space="preserve">3</text>
<path d="M452.5 528.5 L448.5 540.5 M452.5 528.5 L456.5 540.5" fill="none" stroke="#ff00ff" stroke-width="1.1"/><rect x="448.0" y="540" width="9" height="2" fill="#ff00ff"/><text x="449.00" y="552" fill="#ff00ff" xml:space="preserve">4</text>
<path d="M623.5 528.5 L619.5 540.5 M623.5 528.5 L627.5 540.5" fill="none" stroke="#ff00ff" stroke-width="1.1"/><rect x="619.0" y="540" width="9" height="2" fill="#ff00ff"/><text x="620.00" y="552" fill="#ff00ff" xml:space="preserve">5</text>
<path d="M869.5 556.5 L865.5 568.5 M869.5 556.5 L873.5 568.5" fill="none" stroke="#ff00ff" stroke-width="1.1"/><rect x="865.0" y="568" width="9" height="2" fill="#ff00ff"/><text x="866.00" y="580" fill="#ff00ff" xml:space="preserve">6</text>
<path d="M691.5 570.5 L687.5 556.5 M691.5 570.5 L695.5 556.5" fill="none" stroke="#ff00ff" stroke-width="1.1"/><rect x="687.0" y="556" width="9" height="2" fill="#ff00ff"/><text x="688.00" y="554" fill="#ff00ff" xml:space="preserve">7</text>
<text x="870.00" y="560" fill="#ff00ff" xml:space="preserve">3</text>
<path d="M79.5 672.5 L72.5 680 L86.5 680 Z" fill="none" stroke="#ff00ff" stroke-width="1"/>
<path d="M209.5 672.5 L202.5 680 L216.5 680 Z" fill="none" stroke="#ff00ff" stroke-width="1"/>
<path d="M342.5 672.5 L335.5 680 L349.5 680 Z" fill="none" stroke="#ff00ff" stroke-width="1"/>
<path d="M452.5 672.5 L445.5 680 L459.5 680 Z" fill="none" stroke="#ff00ff" stroke-width="1"/>
<path d="M623.5 672.5 L616.5 680 L630.5 680 Z" fill="none" stroke="#ff00ff" stroke-width="1"/>
<path d="M869.5 672.5 L862.5 680 L876.5 680 Z" fill="none" stroke="#ff00ff" stroke-width="1"/>
<path d="M691.5 672 L684.0 680 L699.0 680 Z" fill="#ff00ff"/>
<path d="M71 524 L79.5 531.5 L71 539 Z" fill="#ff00ff"/>
<path d="M870 531.5 L878 524 L878 539 Z" fill="#ff00ff"/>
</svg>
</body></html>
